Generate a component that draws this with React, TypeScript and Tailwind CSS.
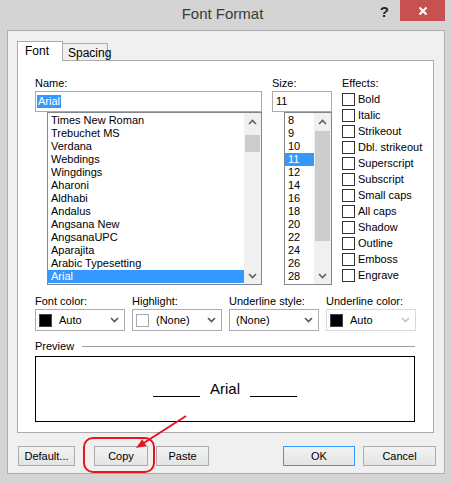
const fontNames = [
  "Times New Roman",
  "Trebuchet MS",
  "Verdana",
  "Webdings",
  "Wingdings",
  "Aharoni",
  "Aldhabi",
  "Andalus",
  "Angsana New",
  "AngsanaUPC",
  "Aparajita",
  "Arabic Typesetting",
  "Arial",
];

const sizes = ["8", "9", "10", "11", "12", "14", "16", "18", "20", "22", "24", "26", "28"];

const effects = [
  "Bold",
  "Italic",
  "Strikeout",
  "Dbl. strikeout",
  "Superscript",
  "Subscript",
  "Small caps",
  "All caps",
  "Shadow",
  "Outline",
  "Emboss",
  "Engrave",
];

const Chevron = ({ up = false, color = "#606060" }: { up?: boolean; color?: string }) => (
  <svg width="9" height="6" viewBox="0 0 9 6">
    <path
      d={up ? "M1 5 L4.5 1.5 L8 5" : "M1 1 L4.5 4.5 L8 1"}
      fill="none"
      stroke={color}
      strokeWidth="1.6"
    />
  </svg>
);

const ListBox = ({
  items,
  selected,
  thumbTop,
  thumbHeight,
  className,
}: {
  items: string[];
  selected: string;
  thumbTop: string;
  thumbHeight: string;
  className: string;
}) => (
  <div className={`flex h-[173px] border border-[#828790] bg-white ${className}`}>
    <div className="flex-1 pt-[1px]">
      {items.map((item) => (
        <div
          key={item}
          className={`h-[13px] pl-[3px] text-[11px] leading-[13px] whitespace-nowrap ${
            item === selected ? "bg-[#3399ff] text-white" : "text-black"
          }`}
        >
          {item}
        </div>
      ))}
    </div>
    <div className="flex w-[17px] flex-col bg-[#f0f0f0]">
      <div className="flex h-[17px] items-center justify-center">
        <Chevron up />
      </div>
      <div className={`mx-[1px] bg-[#cdcdcd] ${thumbTop} ${thumbHeight}`} />
      <div className="flex-1" />
      <div className="flex h-[17px] items-center justify-center">
        <Chevron />
      </div>
    </div>
  </div>
);

const Combo = ({
  label,
  value,
  swatch,
  disabled = false,
}: {
  label: string;
  value: string;
  swatch?: "black" | "white";
  disabled?: boolean;
}) => (
  <div className="flex w-[90px] flex-col">
    <div className="h-[15px] text-[11px] leading-[15px] whitespace-nowrap">{label}</div>
    <div
      className={`flex h-[22px] items-center border bg-white pr-[5px] ${
        disabled ? "border-[#d9d9d9]" : "border-[#acacac]"
      } ${swatch ? "pl-[3px]" : "pl-[6px]"}`}
    >
      {swatch && (
        <div
          className={`mr-[7px] h-[13px] w-[13px] border ${
            swatch === "black" ? "border-[#444] bg-black" : "border-[#aaa] bg-white"
          }`}
        />
      )}
      <span className="flex-1 text-[11px]">{value}</span>
      <Chevron color={disabled ? "#c4c4c4" : "#555"} />
    </div>
  </div>
);

const Button = ({ children, className = "" }: { children: string; className?: string }) => (
  <button
    className={`flex h-[20px] items-center justify-center border bg-linear-to-b from-[#f2f2f2] to-[#e4e4e4] text-[11px] text-black ${className}`}
  >
    {children}
  </button>
);

export default function App() {
  return (
    <div className="relative flex h-[483px] w-[452px] flex-col bg-[#d4d4d4] font-['Liberation_Sans',Arial,sans-serif] text-black">
      {/* Title bar */}
      <div className="flex h-[30px] items-start">
        <div className="flex-1" />
        <div className="flex h-[30px] items-center pb-[1px] text-[15px] text-[#3a3a3a]">Font Format</div>
        <div className="flex flex-1 justify-end pr-[7px]">
          <span className="mt-[1px] mr-[11px] text-[15px] font-bold text-[#222]">?</span>
          <div className="flex h-[21px] w-[45px] items-center justify-center bg-[#c75050]">
            <svg width="10" height="10" viewBox="0 0 10 10">
              <path d="M1.5 1.5 L8.5 8.5 M8.5 1.5 L1.5 8.5" stroke="white" strokeWidth="2.2" />
            </svg>
          </div>
        </div>
      </div>

      {/* Content */}
      <div className="mx-[7px] flex h-[444px] flex-col border border-[#acacac] bg-[#f0f0f0] pt-[10px]">
        {/* Tabs */}
        <div className="ml-[9px] flex h-[19px] items-end">
          <div className="relative z-10 -mb-[1px] h-[20px] w-[46px] border-x border-t border-[#acacac] bg-white pl-[7px] text-[12px] leading-[18px]">
            Font
          </div>
          <div className="h-[17px] w-[45px] border-t border-r border-[#acacac] bg-[#f0f0f0] pl-[5px] text-[12px] leading-[18px]">
            Spacing
          </div>
        </div>

        {/* Panel */}
        <div className="ml-[9px] flex h-[373px] w-[417px] flex-col border border-[#acacac] bg-white pt-[15px] pl-[17px]">
          <div className="flex gap-[10px]">
            {/* Name */}
            <div className="flex w-[227px] flex-col">
              <div className="h-[15px] text-[11px] leading-[14px]">Name:</div>
              <div className="flex h-[21px] items-center border border-[#7eb4ea] bg-white px-[1px]">
                <span className="bg-[#3399ff] px-[1px] text-[11px] leading-[13px] text-white">Arial</span>
              </div>
              <ListBox
                items={fontNames}
                selected="Arial"
                thumbTop="mt-[5px]"
                thumbHeight="h-[17px]"
                className="ml-[12px] w-[215px]"
              />
            </div>

            {/* Size */}
            <div className="flex w-[60px] flex-col">
              <div className="h-[15px] text-[11px] leading-[14px]">Size:</div>
              <div className="flex h-[21px] items-center border border-[#acacac] bg-white pl-[3px] text-[11px]">
                11
              </div>
              <ListBox
                items={sizes}
                selected="11"
                thumbTop="mt-[1px]"
                thumbHeight="h-[110px]"
                className="ml-[12px] w-[48px]"
              />
            </div>

            {/* Effects */}
            <div className="flex flex-col">
              <div className="h-[17px] text-[11px] leading-[14px]">Effects:</div>
              <div className="flex flex-col gap-[3px]">
                {effects.map((effect) => (
                  <label key={effect} className="flex h-[13px] items-center gap-[3px] text-[11px] whitespace-nowrap">
                    <span className="h-[13px] w-[13px] border border-[#333] bg-white" />
                    {effect}
                  </label>
                ))}
              </div>
            </div>
          </div>

          {/* Colour / underline row */}
          <div className="mt-[9px] flex gap-[7px]">
            <Combo label="Font color:" value="Auto" swatch="black" />
            <Combo label="Highlight:" value="(None)" swatch="white" />
            <Combo label="Underline style:" value="(None)" />
            <Combo label="Underline color:" value="Auto" swatch="black" disabled />
          </div>

          {/* Preview */}
          <div className="mt-[7px] flex h-[16px] w-[380px] items-center gap-[8px]">
            <span className="text-[11px]">Preview</span>
            <div className="h-px flex-1 bg-[#a0a0a0]" />
          </div>
          <div className="mt-[2px] flex h-[66px] w-[380px] items-center justify-center gap-[10px] border border-black bg-white pt-[1px]">
            <span className="mt-[13px] h-px w-[47px] bg-black" />
            <span className="font-['Liberation_Sans',Arial,sans-serif] text-[15px]">Arial</span>
            <span className="mt-[13px] h-px w-[47px] bg-black" />
          </div>
        </div>

        {/* Buttons */}
        <div className="mt-[13px] flex pl-[10px]">
          <Button className="w-[57px] border-[#acacac]">Default...</Button>
          <Button className="ml-[19px] w-[54px] border-[#acacac]">Copy</Button>
          <Button className="ml-[8px] w-[53px] border-[#acacac]">Paste</Button>
          <Button className="ml-[74px] w-[72px] border-[#3399ff]">OK</Button>
          <Button className="ml-[8px] w-[73px] border-[#acacac]">Cancel</Button>
        </div>
      </div>

      {/* Red annotation overlay */}
      <svg className="pointer-events-none absolute top-0 left-0" width="452" height="483" viewBox="0 0 452 483">
        <rect x="84" y="438" width="70" height="34" rx="9" fill="none" stroke="#e8141e" strokeWidth="2" />
        <line x1="186" y1="416" x2="143" y2="443.5" stroke="#e8141e" strokeWidth="2" />
        <polygon points="136,448 146.6,446 142.2,439.2" fill="#e8141e" />
      </svg>
    </div>
  );
}
